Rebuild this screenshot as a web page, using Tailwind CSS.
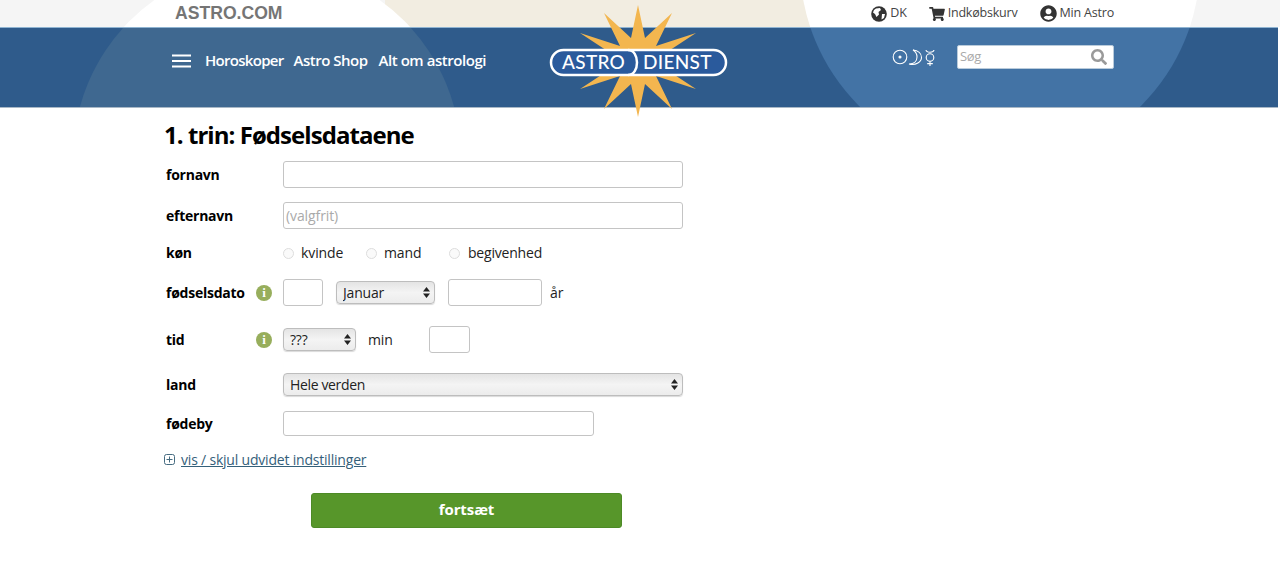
<!DOCTYPE html>
<html lang="da">
<head>
    <meta charset="UTF-8">
    <title>Astrodienst - Fødselsdataene</title>
    <script src="https://cdn.jsdelivr.net/npm/@tailwindcss/browser@4"></script>
</head>
<body class="bg-white font-['Open_Sans',sans-serif] text-[#222]">
    <header class="relative h-[108px]">
        <!-- top strip -->
        <div class="relative h-[27px] bg-[#f5f5f5] overflow-hidden">
            <div class="absolute left-[385px] top-0 h-[27px] w-[440px] bg-[#f2ede1]"></div>
            <div class="absolute left-[73px] top-[-36px] size-[388px] rounded-full bg-white"></div>
            <div class="absolute left-[800px] top-[-236px] size-[400px] rounded-full bg-white"></div>
            <div class="relative flex h-full items-center justify-between pl-[175px] pr-[166px]">
                <span class="font-['Liberation_Sans',sans-serif] text-[17.6px] font-bold text-[#757575]">ASTRO.COM</span>
                <div class="flex items-center text-[12.5px] tracking-[-0.2px] text-[#444]">
                    <svg class="mr-[3px] size-[16px]" viewBox="0 0 16 16"><circle cx="8" cy="8" r="7.8" fill="#333"/><path d="M5 2.500 9 2 10 4 7.500 6 8 8.500 5.500 11 4 8 2 6.500 3 4ZM11 8h3l-1 4-2.500 1.500Z" fill="#fff"/></svg>
                    <span>DK</span>
                    <svg class="ml-[22px] mr-[3px] h-[14px] w-[16px]" viewBox="0 0 576 512"><path fill="#333" d="M528.12 301.319l47.273-208C578.806 78.301 567.391 64 551.99 64H159.208l-9.166-44.81C147.758 8.021 137.93 0 126.529 0H24C10.745 0 0 10.745 0 24v16c0 13.255 10.745 24 24 24h69.883l70.248 343.435C147.325 417.1 136 435.222 136 456c0 30.928 25.072 56 56 56s56-25.072 56-56c0-15.674-6.447-29.835-16.824-40h209.647C430.447 426.165 424 440.326 424 456c0 30.928 25.072 56 56 56s56-25.072 56-56c0-22.172-12.888-41.332-31.579-50.405l5.517-24.276c3.413-15.018-8.002-29.319-23.403-29.319H218.117l-6.545-32h293.145c11.206 0 20.92-7.754 23.403-18.681z"/></svg>
                    <span>Indkøbskurv</span>
                    <svg class="ml-[22px] mr-[3px] size-[17px]" viewBox="0 0 496 512"><path fill="#333" d="M248 8C111 8 0 119 0 256s111 248 248 248 248-111 248-248S385 8 248 8zm0 96c48.6 0 88 39.4 88 88s-39.4 88-88 88-88-39.4-88-88 39.4-88 88-88zm0 344c-58.7 0-111.3-26.6-146.5-68.2 18.8-35.4 55.6-59.8 98.5-59.8 2.4 0 4.8.4 7.1 1.1 13 4.2 26.600 6.900 40.900 6.900 14.300 0 28-2.700 40.900-6.900 2.300-.7 4.700-1.100 7.100-1.100 42.900 0 79.700 24.400 98.500 59.800C359.300 421.400 306.700 448 248 448z"/></svg>
                    <span>Min Astro</span>
                </div>
            </div>
        </div>

        <!-- blue band -->
        <div class="relative h-[81px] w-[1278px] overflow-hidden border-t border-b border-t-[#8fb4d2] border-b-[#a9b8c6] bg-[#2f5b8b]">
            <div class="absolute left-[73px] top-[-64px] size-[388px] rounded-full bg-[#3f6890]"></div>
            <div class="absolute left-[800px] top-[-264px] size-[400px] rounded-full bg-[#4373a5]"></div>
            <div class="relative flex h-full items-start pl-[172px] pr-[164px] pt-[21px]">
                <svg class="mt-[5px] mr-[14px] h-[14px] w-[19px]" viewBox="0 0 19 14"><path d="M0 1.500h19M0 7h19M0 12.500h19" stroke="#fff" stroke-width="2"/></svg>
                <nav class="flex text-[15px] font-semibold text-white">
                    <a href="#" class="tracking-[-0.7px]">Horoskoper</a>
                    <a href="#" class="ml-[10px] tracking-[-0.5px]">Astro Shop</a>
                    <a href="#" class="ml-[11px] tracking-[-0.45px]">Alt om astrologi</a>
                </nav>
                <div class="ml-auto -mt-[4px] flex items-center">
                    <svg class="mr-[20px] h-[20px] w-[46px]" viewBox="0 0 46 20" fill="none" stroke="#fff" stroke-width="1.100">
                        <circle cx="9" cy="10" r="6.800"/><circle cx="9" cy="10" r="1" fill="#fff"/>
                        <path d="M22 3c5 .5 8.500 3.500 8.500 7.500S25 19 18 17c5 0 8-3 8-7s-1.500-5.500-4-7Z"/>
                        <circle cx="39" cy="10.500" r="3.800"/><path d="M35 3c.5 3 7.500 3 8 0M39 14.300v4.700M36.200 16.600h5.600"/>
                    </svg>
                    <div class="flex h-[24px] w-[157px] items-center justify-between rounded-[2px] border border-[#b9cbdb] bg-white pl-[2px] pr-[6px]">
                        <input type="text" placeholder="Søg" class="w-[100px] bg-transparent text-[13px] tracking-[-0.3px] placeholder-[#aaa] outline-none">
                        <svg class="size-[16px]" viewBox="0 0 512 512"><path fill="#9a9a9a" d="M505 442.700L405.300 343c-4.500-4.500-10.600-7-17-7H372c27.600-35.300 44-79.700 44-128C416 93.100 322.900 0 208 0S0 93.100 0 208s93.100 208 208 208c48.300 0 92.700-16.400 128-44v16.300c0 6.400 2.500 12.500 7 17l99.700 99.700c9.400 9.400 24.600 9.400 33.900 0l28.300-28.300c9.400-9.400 9.400-24.600.1-34zM208 336c-70.700 0-128-57.200-128-128 0-70.700 57.200-128 128-128 70.700 0 128 57.200 128 128 0 70.700-57.200 128-128 128z"/></svg>
                    </div>
                </div>
            </div>
        </div>

        <!-- logo over both strips -->
        <svg class="absolute left-[548px] top-[5px] h-[113px] w-[181px]" viewBox="0 0 181 113">
            <polygon transform="translate(90 56)" fill="#f3b64f" points="0,-56 7,-23 34,-48 18,-15 58,-28 23,-5 40,0 23,5 58,28 18,15 34,48 7,23 0,56 -7,23 -34,48 -18,15 -58,28 -23,5 -40,0 -23,-5 -58,-28 -18,-15 -34,-48 -7,-23"/>
            <rect x="3" y="45" width="175" height="25" rx="12.500" fill="#2a5a9c" stroke="#fff" stroke-width="2.500"/>
            <path d="M80 45c6 0 9 6 9 12.500S86 70 80 70" fill="none" stroke="#fff" stroke-width="2.500"/>
            <text x="14" y="64" fill="#fff" font-family="Lato, sans-serif" font-size="19" font-weight="500" letter-spacing="0.300">ASTRO</text>
            <text x="95" y="64" fill="#fff" font-family="Lato, sans-serif" font-size="19" font-weight="500" letter-spacing="0.300">DIENST</text>
        </svg>
    </header>

    <main class="pl-[164px]">
        <h1 class="mt-[12px] text-[24px] leading-[30px] font-bold tracking-[-0.95px] text-black">1. trin: Fødselsdataene</h1>

        <form class="mt-[11px] pl-[2px] text-[14px]">
            <div class="flex h-[27px] items-center">
                <label class="w-[117px] font-bold tracking-[-0.25px] text-black">fornavn</label>
                <input type="text" class="h-[27px] w-[400px] rounded-[3px] border border-[#c4c4c4] bg-white">
            </div>
            <div class="mt-[14px] flex h-[27px] items-center">
                <label class="w-[117px] font-bold tracking-[-0.25px] text-black">efternavn</label>
                <input type="text" placeholder="(valgfrit)" class="h-[27px] w-[400px] rounded-[3px] border border-[#c4c4c4] bg-white px-[2px] text-[14px] tracking-[-0.1px] placeholder-[#aaa]">
            </div>
            <div class="mt-[13px] flex h-[20px] items-center">
                <label class="w-[117px] font-bold tracking-[-0.25px] text-black">køn</label>
                <input type="radio" name="sex" class="mt-[2px] size-[11px] appearance-none rounded-full border border-[#ddd] bg-[#fafafa]">
                <span class="ml-[7px] w-[65px] tracking-[-0.1px]">kvinde</span>
                <input type="radio" name="sex" class="mt-[2px] size-[11px] appearance-none rounded-full border border-[#ddd] bg-[#fafafa]">
                <span class="ml-[7px] w-[65px] tracking-[-0.1px]">mand</span>
                <input type="radio" name="sex" class="mt-[2px] size-[11px] appearance-none rounded-full border border-[#ddd] bg-[#fafafa]">
                <span class="ml-[8px] tracking-[-0.2px]">begivenhed</span>
            </div>
            <div class="mt-[17px] flex h-[27px] items-center">
                <label class="w-[90px] font-bold tracking-[-0.25px] text-black">fødselsdato</label>
                <span class="flex size-[16px] items-center justify-center rounded-full bg-[#97ae5c] font-['Liberation_Serif',serif] text-[13px] font-bold text-white">i</span>
                <input type="text" class="ml-[11px] h-[27px] w-[40px] rounded-[3px] border border-[#c4c4c4]">
                <div class="relative ml-[13px] h-[23px] w-[99px]">
                    <select class="h-full w-full appearance-none rounded-[4px] border border-[#bdbdbd] bg-gradient-to-b from-[#e4e4e4] via-[#f4f4f4] to-[#ececec] pl-[6px] pb-[1px] text-[14px] tracking-[-0.2px] shadow-[0_1px_1px_rgba(0,0,0,0.15)]"><option>Januar</option></select>
                    <svg class="absolute right-[5px] top-[6px] h-[11px] w-[7px]" viewBox="0 0 7 11"><path d="M3.500 0 7 4.500H0ZM3.500 11 0 6.500h7Z" fill="#222"/></svg>
                </div>
                <input type="text" class="ml-[13px] h-[27px] w-[94px] rounded-[3px] border border-[#c4c4c4]">
                <span class="ml-[8px]">år</span>
            </div>
            <div class="mt-[20px] flex h-[27px] items-center">
                <label class="w-[90px] font-bold tracking-[-0.25px] text-black">tid</label>
                <span class="flex size-[16px] items-center justify-center rounded-full bg-[#97ae5c] font-['Liberation_Serif',serif] text-[13px] font-bold text-white">i</span>
                <div class="relative ml-[11px] h-[23px] w-[73px]">
                    <select class="h-full w-full appearance-none rounded-[4px] border border-[#bdbdbd] bg-gradient-to-b from-[#e4e4e4] via-[#f4f4f4] to-[#ececec] pl-[6px] pb-[1px] text-[14px] tracking-[-0.2px] shadow-[0_1px_1px_rgba(0,0,0,0.15)]"><option>???</option></select>
                    <svg class="absolute right-[5px] top-[6px] h-[11px] w-[7px]" viewBox="0 0 7 11"><path d="M3.500 0 7 4.500H0ZM3.500 11 0 6.500h7Z" fill="#222"/></svg>
                </div>
                <span class="ml-[12px] w-[61px] tracking-[-0.1px]">min</span>
                <input type="text" class="h-[27px] w-[41px] rounded-[3px] border border-[#c4c4c4]">
            </div>
            <div class="mt-[20px] flex h-[23px] items-center">
                <label class="w-[117px] pb-[1px] font-bold tracking-[-0.25px] text-black">land</label>
                <div class="relative h-[23px] w-[400px]">
                    <select class="h-full w-full appearance-none rounded-[4px] border border-[#bdbdbd] bg-gradient-to-b from-[#e4e4e4] via-[#f4f4f4] to-[#ececec] pl-[6px] pb-[2px] text-[14px] tracking-[-0.35px] shadow-[0_1px_1px_rgba(0,0,0,0.15)]"><option>Hele verden</option></select>
                    <svg class="absolute right-[5px] top-[6px] h-[11px] w-[7px]" viewBox="0 0 7 11"><path d="M3.500 0 7 4.500H0ZM3.500 11 0 6.500h7Z" fill="#222"/></svg>
                </div>
            </div>
            <div class="mt-[15px] flex h-[25px] items-center">
                <label class="w-[117px] pb-[1px] font-bold tracking-[-0.25px] text-black">fødeby</label>
                <input type="text" class="h-[25px] w-[311px] rounded-[3px] border border-[#c4c4c4]">
            </div>
            <div class="-ml-[2px] mt-[13px] flex h-[20px] items-center">
                <svg class="mr-[6px] size-[11px]" viewBox="0 0 11 11" fill="none" stroke="#456b80"><rect x=".5" y=".5" width="10" height="10" rx="2"/><path d="M5.500 2.500v6M2.500 5.500h6"/></svg>
                <a href="#" class="tracking-[-0.2px] text-[#34607a] underline">vis / skjul udvidet indstillinger</a>
            </div>
            <button type="button" class="ml-[145px] mt-[24px] block h-[35px] w-[311px] rounded-[3px] border border-[#4d8a26] bg-[#57962a] pb-[2px] text-[15px] font-bold tracking-[-0.1px] text-white">fortsæt</button>
        </form>
    </main>
</body>
</html>
